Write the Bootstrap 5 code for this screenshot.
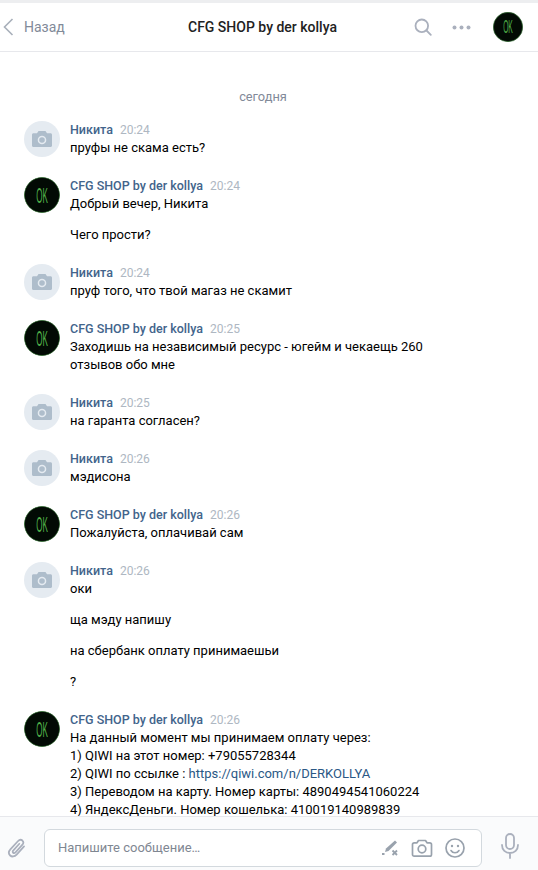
<!DOCTYPE html>
<html lang="ru"><head><meta charset="utf-8"><title>CFG SHOP</title>
<link href="https://cdn.jsdelivr.net/npm/bootstrap@5.3.0/dist/css/bootstrap.min.css" rel="stylesheet">
<style>
html,body{height:100%;margin:0;overflow:hidden}
body{font-family:Roboto,"Liberation Sans",sans-serif;font-size:13px;line-height:18px;color:#000;background:#fff}
.shell{height:870px;border-top:3px solid #edeef0}
.topbar{height:49px;border-bottom:1px solid #e7e8ec;flex:none}
.backlink{width:70px;color:#828a99;padding-left:3px;gap:10px;text-decoration:none}
.backlink span{font-size:14px}
.ttl{font-weight:500;color:#222;font-size:14px;margin-left:118px}
.tools{gap:20px;padding-right:15px}
.tool-ava{margin-left:2px}
.log{padding:36px 0 0 24px;overflow:hidden;flex:1 1 auto;min-height:0}
.daymark{color:#828a99;text-align:center;margin-bottom:15px;height:18px;width:478px;font-size:12.8px}
.msg{gap:10px;padding-bottom:20px;width:420px}
.ava{width:36px;height:36px;border-radius:50%;flex:none}
.ava-blank{background:#e5ebf1}
.who{font-weight:500;color:#42648b;white-space:nowrap;font-size:12.5px}
.when{color:#aeb7c2;margin-left:7px;font-weight:400;font-size:12px}
.msg-line{margin:0}
.msg-line+.msg-line{margin-top:13px}
.log a{color:#2a5885;text-decoration:none}
.composer{height:54px;flex:none;background:#fafbfc;border-top:1px solid #e7e8ec;padding:12px 0 0 7px}
.field{width:438px;height:38px;margin-left:16px;border:1px solid #d3d9de;border-radius:6px;background:#fff;padding:0 16px 0 13px;color:#7f8792;font-size:13px}
.field-tools{gap:12px}
.clip{width:21px}
.mic{margin-left:18px}
</style></head><body>
<svg width="0" height="0" class="position-absolute"><defs>
<symbol id="logo" viewBox="0 0 36 36"><circle cx="18" cy="18" r="17.600" fill="#020a04" stroke="#2c6b2c" stroke-width=".8"/><text x="0" y="0" fill="#4fae48" font-family="Liberation Sans" font-size="13" text-anchor="middle" transform="translate(18 25.500) scale(.62 1.700)">OK</text></symbol>
<symbol id="cam" viewBox="0 0 36 36"><path fill="#aebdcb" d="M14.500 10h7l1.500 2.300h3.500c.9 0 1.500.7 1.500 1.500v10.700c0 .9-.6 1.500-1.500 1.500h-17c-.9 0-1.500-.6-1.500-1.500V13.800c0-.8.6-1.500 1.500-1.500H13z"/><circle cx="18" cy="19" r="4.300" fill="#e5ebf1"/><circle cx="18" cy="19" r="2.800" fill="#aebdcb"/></symbol>
</defs></svg>
<div class="shell d-flex flex-column">
 <div class="topbar d-flex align-items-center">
  <a class="backlink d-flex align-items-center flex-shrink-0" href="#"><svg width="11" height="18" viewBox="0 0 11 18"><path d="M9.500 1 1.500 9l8 8" fill="none" stroke="#a8afba" stroke-width="1.600"/></svg><span>Назад</span></a>
  <div class="ttl flex-grow-1 text-nowrap">CFG SHOP by der kollya</div>
  <div class="tools d-flex align-items-center">
   <svg width="18" height="18" viewBox="0 0 18 18"><circle cx="7.800" cy="7.800" r="6.300" fill="none" stroke="#aab0bd" stroke-width="1.800"/><path d="m12.500 12.500 4.300 4.300" stroke="#aab0bd" stroke-width="1.800" stroke-linecap="round"/></svg>
   <svg width="19" height="5" viewBox="0 0 19 5"><circle cx="2.500" cy="2.500" r="2" fill="#aab0bd"/><circle cx="9.500" cy="2.500" r="2" fill="#aab0bd"/><circle cx="16.500" cy="2.500" r="2" fill="#aab0bd"/></svg>
   <svg class="tool-ava" width="30" height="30"><use href="#logo"/></svg>
  </div>
 </div>
 <div class="log">
  <div class="daymark">сегодня</div>
  <div class="msg d-flex"><svg class="ava ava-blank"><use href="#cam"/></svg><div><div class="who">Никита<span class="when">20:24</span></div><p class="msg-line">пруфы не скама есть?</p></div></div>
  <div class="msg d-flex"><svg class="ava"><use href="#logo"/></svg><div><div class="who">CFG SHOP by der kollya<span class="when">20:24</span></div><p class="msg-line">Добрый вечер, Никита</p><p class="msg-line">Чего прости?</p></div></div>
  <div class="msg d-flex"><svg class="ava ava-blank"><use href="#cam"/></svg><div><div class="who">Никита<span class="when">20:24</span></div><p class="msg-line">пруф того, что твой магаз не скамит</p></div></div>
  <div class="msg d-flex"><svg class="ava"><use href="#logo"/></svg><div><div class="who">CFG SHOP by der kollya<span class="when">20:25</span></div><p class="msg-line">Заходишь на независимый ресурс - югейм и чекаещь 260 отзывов обо мне</p></div></div>
  <div class="msg d-flex"><svg class="ava ava-blank"><use href="#cam"/></svg><div><div class="who">Никита<span class="when">20:25</span></div><p class="msg-line">на гаранта согласен?</p></div></div>
  <div class="msg d-flex"><svg class="ava ava-blank"><use href="#cam"/></svg><div><div class="who">Никита<span class="when">20:26</span></div><p class="msg-line">мэдисона</p></div></div>
  <div class="msg d-flex"><svg class="ava"><use href="#logo"/></svg><div><div class="who">CFG SHOP by der kollya<span class="when">20:26</span></div><p class="msg-line">Пожалуйста, оплачивай сам</p></div></div>
  <div class="msg d-flex"><svg class="ava ava-blank"><use href="#cam"/></svg><div><div class="who">Никита<span class="when">20:26</span></div><p class="msg-line">оки</p><p class="msg-line">ща мэду напишу</p><p class="msg-line">на сбербанк оплату принимаешьи</p><p class="msg-line">?</p></div></div>
  <div class="msg d-flex"><svg class="ava"><use href="#logo"/></svg><div><div class="who">CFG SHOP by der kollya<span class="when">20:26</span></div><p class="msg-line">На данный момент мы принимаем оплату через:<br>1) QIWI на этот номер: +79055728344<br>2) QIWI по ссылке : <a href="#">https://qiwi.com/n/DERKOLLYA</a><br>3) Переводом на карту. Номер карты: 4890494541060224<br>4) ЯндексДеньги. Номер кошелька: 410019140989839</p></div></div>
 </div>
 <div class="composer d-flex align-items-start">
  <svg class="clip mt-2" width="21" height="23" viewBox="0 0 24 26"><path d="M19.500 10.500 11 20c-2.400 2.600-5.600 2.700-7.400 1-1.900-1.800-1.700-4.800.5-7.200l8.300-9.100c1.700-1.800 3.800-2 5.200-.8 1.400 1.300 1.300 3.300-.2 5l-7.700 8.500c-.9 1-2 1.100-2.700.5-.7-.7-.6-1.800.3-2.800l6.800-7.500" fill="none" stroke="#aab0bd" stroke-width="2" stroke-linecap="round"/></svg>
  <div class="field d-flex align-items-center justify-content-between">
   <span>Напишите сообщение…</span>
   <div class="field-tools d-flex align-items-center">
    <svg width="18" height="16" viewBox="0 0 18 16"><path d="m14 .5 2 2-8.500 8.500-3.500 1 1-3.500z" fill="#99a2ad"/><path d="M1 14h2.500M11.500 10.500l4.500 4.500M16 10.500l-4.500 4.500" stroke="#99a2ad" stroke-width="1.800"/></svg>
    <svg width="22" height="20" viewBox="0 0 22 20"><path d="M7.500 2.500h7l1.500 2.300h2.800c1 0 1.700.7 1.700 1.700v10c0 1-.7 1.700-1.700 1.700H3.200c-1 0-1.700-.7-1.700-1.700v-10c0-1 .7-1.700 1.700-1.700H6z" fill="none" stroke="#99a2ad" stroke-width="1.700" stroke-linejoin="round"/><circle cx="11" cy="11" r="3.800" fill="none" stroke="#99a2ad" stroke-width="1.700"/></svg>
    <svg width="20" height="20" viewBox="0 0 20 20"><circle cx="10" cy="10" r="9" fill="none" stroke="#99a2ad" stroke-width="1.700"/><circle cx="7" cy="8" r="1.200" fill="#99a2ad"/><circle cx="13" cy="8" r="1.200" fill="#99a2ad"/><path d="M6 12.500c1 1.700 2.400 2.300 4 2.300s3-.6 4-2.300" fill="none" stroke="#99a2ad" stroke-width="1.600" stroke-linecap="round"/></svg>
   </div>
  </div>
  <svg class="mic mt-1" width="20" height="26" viewBox="0 0 20 26"><rect x="6" y="1" width="8" height="15" rx="4" fill="none" stroke="#aab0bd" stroke-width="1.800"/><path d="M2 12c0 5 3.500 8 8 8s8-3 8-8M10 20v5" fill="none" stroke="#aab0bd" stroke-width="1.800" stroke-linecap="round"/></svg>
 </div>
</div>
</body></html>
